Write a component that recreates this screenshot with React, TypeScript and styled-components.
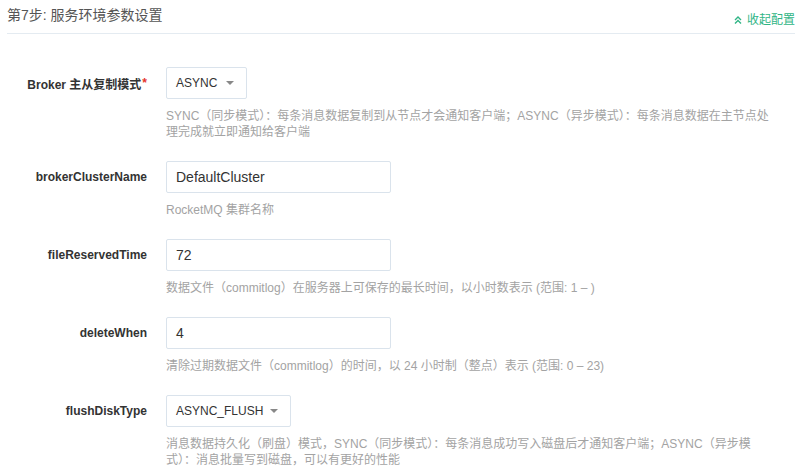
import React from "react";
import styled, { createGlobalStyle } from "styled-components";

const Global = createGlobalStyle`
  html, body { margin: 0; padding: 0; background: #fff; }
  body { font-family: "Liberation Sans", "Noto Sans CJK SC", sans-serif; }
  * { box-sizing: border-box; }
`;

const Page = styled.div`
  width: 800px;
  height: 476px;
  overflow: hidden;
  padding: 0 5px 0 7px;
`;

const Header = styled.div`
  display: flex;
  justify-content: space-between;
  align-items: flex-start;
  height: 34px;
  border-bottom: 1px solid #e4ebf1;
`;

const Title = styled.h3`
  margin: 6px 0 0;
  font-size: 14px;
  font-weight: 400;
  line-height: 18px;
  color: #555;
`;

const Toggle = styled.a`
  display: flex;
  align-items: center;
  gap: 5px;
  margin-top: 12px;
  font-size: 12px;
  line-height: 16px;
  color: #2fb585;
  cursor: pointer;
`;

const Form = styled.div`
  padding-top: 33px;
  display: flex;
  flex-direction: column;
  gap: 21px;
`;

const Row = styled.div`
  display: grid;
  grid-template-columns: 140px 1fr;
  column-gap: 19px;
`;

const Label = styled.label`
  height: 32px;
  display: flex;
  align-items: center;
  justify-content: flex-end;
  font-size: 12px;
  font-weight: 700;
  color: #333;
  white-space: nowrap;
`;

const Star = styled.span`
  color: #e5342b;
  margin-left: 1px;
`;

const Field = styled.div`
  display: flex;
  flex-direction: column;
  align-items: flex-start;
`;

const Input = styled.div<{ $w: number }>`
  width: ${(p) => p.$w}px;
  height: 32px;
  border: 1px solid #dae3ec;
  border-radius: 2px;
  padding: 0 9px;
  display: flex;
  align-items: center;
  font-size: 14px;
  color: #333;
`;

const Select = styled.div<{ $w: number }>`
  width: ${(p) => p.$w}px;
  height: 32px;
  border: 1px solid #dae3ec;
  border-radius: 2px;
  padding: 0 12px 0 9px;
  display: flex;
  align-items: center;
  justify-content: space-between;
  font-size: 12px;
  color: #333;
`;

const Caret = styled.span`
  width: 0;
  height: 0;
  border-left: 4px solid transparent;
  border-right: 4px solid transparent;
  border-top: 4px solid #888;
`;

const Help = styled.div`
  margin-top: 9px;
  font-size: 12px;
  line-height: 16px;
  color: #a3a3a3;
  white-space: nowrap;
`;

const rows = [
  {
    label: "Broker 主从复制模式",
    required: true,
    kind: "select",
    value: "ASYNC",
    w: 81,
    help: [
      "SYNC（同步模式）：每条消息数据复制到从节点才会通知客户端；ASYNC（异步模式）：每条消息数据在主节点处",
      "理完成就立即通知给客户端",
    ],
  },
  {
    label: "brokerClusterName",
    kind: "input",
    value: "DefaultCluster",
    w: 225,
    help: ["RocketMQ 集群名称"],
  },
  {
    label: "fileReservedTime",
    kind: "input",
    value: "72",
    w: 225,
    help: ["数据文件（commitlog）在服务器上可保存的最长时间，以小时数表示 (范围: 1 – )"],
  },
  {
    label: "deleteWhen",
    kind: "input",
    value: "4",
    w: 225,
    help: ["清除过期数据文件（commitlog）的时间，以 24 小时制（整点）表示 (范围: 0 – 23)"],
  },
  {
    label: "flushDiskType",
    kind: "select",
    value: "ASYNC_FLUSH",
    w: 125,
    help: [
      "消息数据持久化（刷盘）模式，SYNC（同步模式）：每条消息成功写入磁盘后才通知客户端；ASYNC（异步模",
      "式）：消息批量写到磁盘，可以有更好的性能",
    ],
  },
];

export default function App() {
  return (
    <Page>
      <Global />
      <Header>
        <Title>第7步: 服务环境参数设置</Title>
        <Toggle>
          <svg width="8" height="8" viewBox="0 0 8 8" fill="none" stroke="#2fb585" strokeWidth="1.4">
            <path d="M1 4 L4 1 L7 4" />
            <path d="M1 7.5 L4 4.5 L7 7.5" />
          </svg>
          收起配置
        </Toggle>
      </Header>
      <Form>
        {rows.map((r) => (
          <Row key={r.label}>
            <Label>
              {r.label}
              {r.required && <Star>*</Star>}
            </Label>
            <Field>
              {r.kind === "select" ? (
                <Select $w={r.w}>
                  {r.value}
                  <Caret />
                </Select>
              ) : (
                <Input $w={r.w}>{r.value}</Input>
              )}
              <Help>
                {r.help.map((line, i) => (
                  <React.Fragment key={i}>
                    {i > 0 && <br />}
                    {line}
                  </React.Fragment>
                ))}
              </Help>
            </Field>
          </Row>
        ))}
      </Form>
    </Page>
  );
}
